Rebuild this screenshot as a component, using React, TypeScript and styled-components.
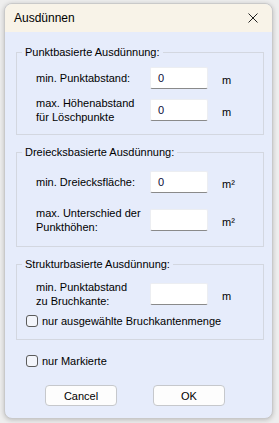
import styled, { createGlobalStyle } from 'styled-components';

const GlobalStyle = createGlobalStyle`
  html, body {
    margin: 0;
    padding: 0;
    background: #eeeeee;
  }
  body {
    font-family: "Liberation Sans", Arial, sans-serif;
    font-size: 11px;
    color: #000;
  }
`;

const Page = styled.div`
  padding: 3px 6px 4px 4px;
`;

const Window = styled.div`
  width: 269px;
  height: 416px;
  box-sizing: border-box;
  border: 1px solid #c9c9c9;
  border-radius: 8px;
  overflow: hidden;
  display: flex;
  flex-direction: column;
  background: #e6ecfb;
  box-shadow: 0 1px 5px rgba(0, 0, 0, 0.22);
`;

const TitleBar = styled.div`
  height: 28px;
  flex: none;
  display: flex;
  align-items: center;
  justify-content: space-between;
  padding: 0 10px 0 9px;
  background: #f8f3e8;
  font-size: 12px;
`;

const CloseIcon = styled.svg`
  width: 10px;
  height: 10px;
  margin-right: 4px;
`;

const Body = styled.div`
  flex: 1;
  padding: 13px 8px 0 11px;
  display: flex;
  flex-direction: column;
`;

const Group = styled.fieldset<{ $pt: number; $pb: number }>`
  margin: 0 0 10px 0;
  padding: ${(p) => p.$pt}px 0 ${(p) => p.$pb}px 0;
  border: 1px solid #d3d7e0;
  min-width: 0;
`;

const Legend = styled.legend`
  margin-left: 5px;
  padding: 0 3px;
  font-size: 11px;
  line-height: 14px;
`;

const Row = styled.div<{ $h: number }>`
  height: ${(p) => p.$h}px;
  display: flex;
  align-items: center;
  padding-left: 19px;
`;

const Label = styled.div`
  width: 114px;
  line-height: 14px;
`;

const Field = styled.div`
  width: 58px;
  height: 22px;
  box-sizing: border-box;
  background: #fff;
  border: 1px solid #eceef2;
  border-bottom: 1px solid #8a8a8a;
  border-radius: 2px;
  padding-left: 7px;
  display: flex;
  align-items: center;
  color: #0a0a3a;
`;

const Unit = styled.div`
  margin-left: 14px;
  padding-top: 3px;
`;

const Check = styled.label<{ $indent: number }>`
  display: flex;
  align-items: center;
  gap: 4px;
  height: 22px;
  padding-left: ${(p) => p.$indent}px;
`;

const Box = styled.span`
  width: 12px;
  height: 12px;
  box-sizing: border-box;
  border: 1px solid #5b5b5b;
  border-radius: 3px;
  background: #f3f5fb;
`;

const Buttons = styled.div`
  display: flex;
  gap: 36px;
  padding-left: 29px;
  margin-top: 13px;
`;

const Button = styled.div`
  width: 72px;
  height: 21px;
  box-sizing: border-box;
  border: 1px solid #c6c8cc;
  border-radius: 4px;
  background: #fdfdfd;
  display: flex;
  align-items: center;
  justify-content: center;
`;

export default function App() {
  return (
    <Page>
      <GlobalStyle />
      <Window>
        <TitleBar>
          <span>Ausdünnen</span>
          <CloseIcon viewBox="0 0 10 10">
            <path d="M0.5 0.5 L9.5 9.5 M9.5 0.5 L0.5 9.5" stroke="#222" strokeWidth="1" />
          </CloseIcon>
        </TitleBar>
        <Body>
          <Group $pt={3} $pb={8}>
            <Legend>Punktbasierte Ausdünnung:</Legend>
            <Row $h={32}>
              <Label>min. Punktabstand:</Label>
              <Field>0</Field>
              <Unit>m</Unit>
            </Row>
            <Row $h={32}>
              <Label>
                max. Höhenabstand
                <br />
                für Löschpunkte
              </Label>
              <Field>0</Field>
              <Unit>m</Unit>
            </Row>
          </Group>
          <Group $pt={4} $pb={7}>
            <Legend>Dreiecksbasierte Ausdünnung:</Legend>
            <Row $h={38}>
              <Label>min. Dreiecksfläche:</Label>
              <Field>0</Field>
              <Unit>m²</Unit>
            </Row>
            <Row $h={38}>
              <Label>
                max. Unterschied der
                <br />
                Punkthöhen:
              </Label>
              <Field />
              <Unit>m²</Unit>
            </Row>
          </Group>
          <Group $pt={7} $pb={7}>
            <Legend>Strukturbasierte Ausdünnung:</Legend>
            <Row $h={32}>
              <Label>
                min. Punktabstand
                <br />
                zu Bruchkante:
              </Label>
              <Field />
              <Unit>m</Unit>
            </Row>
            <Check $indent={9}>
              <Box />
              nur ausgewählte Bruchkantenmenge
            </Check>
          </Group>
          <Check $indent={10}>
            <Box />
            nur Markierte
          </Check>
          <Buttons>
            <Button>Cancel</Button>
            <Button>OK</Button>
          </Buttons>
        </Body>
      </Window>
    </Page>
  );
}
